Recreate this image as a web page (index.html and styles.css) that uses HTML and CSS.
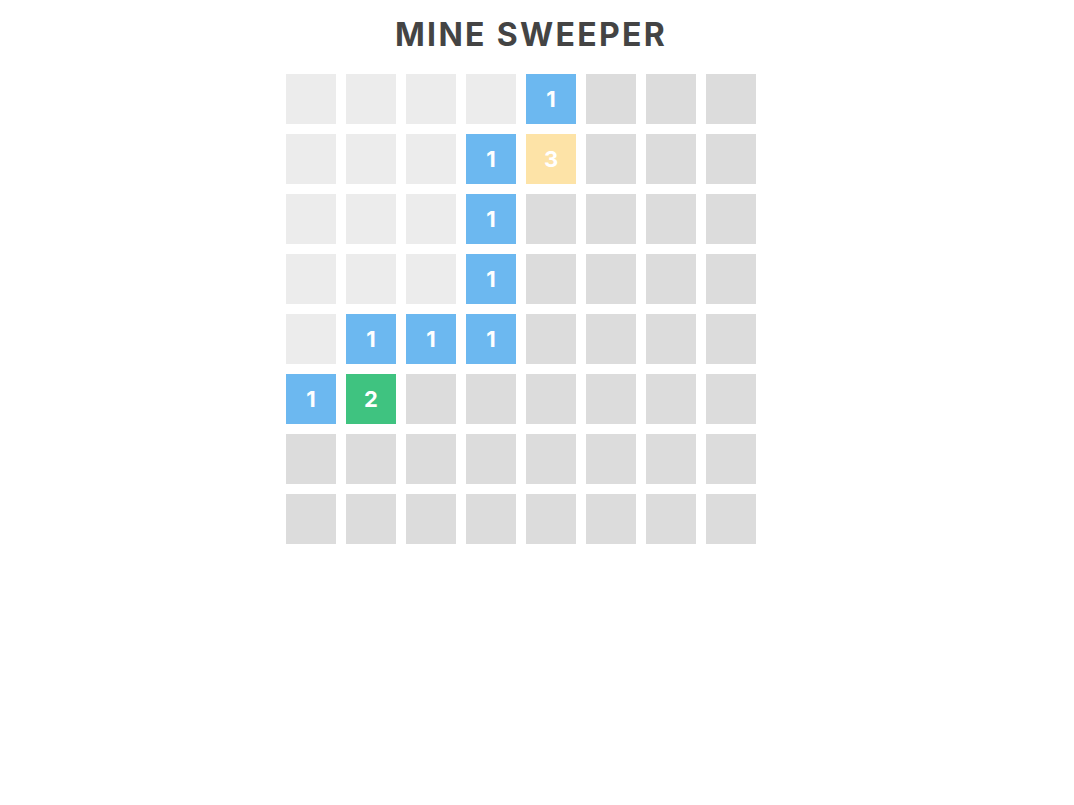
FILE: index.html
```html
<!DOCTYPE html>
<html lang="en">
<head>
    <meta charset="UTF-8">
    <title>Mine Sweeper</title>
    <link rel="stylesheet" href="styles.css">
</head>
<body>
    <div class="game">
        <h1 class="title">MINE SWEEPER</h1>
        <div class="board">
            <div class="cell open"></div><div class="cell open"></div><div class="cell open"></div><div class="cell open"></div><div class="cell one">1</div><div class="cell"></div><div class="cell"></div><div class="cell"></div>
            <div class="cell open"></div><div class="cell open"></div><div class="cell open"></div><div class="cell one">1</div><div class="cell three">3</div><div class="cell"></div><div class="cell"></div><div class="cell"></div>
            <div class="cell open"></div><div class="cell open"></div><div class="cell open"></div><div class="cell one">1</div><div class="cell"></div><div class="cell"></div><div class="cell"></div><div class="cell"></div>
            <div class="cell open"></div><div class="cell open"></div><div class="cell open"></div><div class="cell one">1</div><div class="cell"></div><div class="cell"></div><div class="cell"></div><div class="cell"></div>
            <div class="cell open"></div><div class="cell one">1</div><div class="cell one">1</div><div class="cell one">1</div><div class="cell"></div><div class="cell"></div><div class="cell"></div><div class="cell"></div>
            <div class="cell one">1</div><div class="cell two">2</div><div class="cell"></div><div class="cell"></div><div class="cell"></div><div class="cell"></div><div class="cell"></div><div class="cell"></div>
            <div class="cell"></div><div class="cell"></div><div class="cell"></div><div class="cell"></div><div class="cell"></div><div class="cell"></div><div class="cell"></div><div class="cell"></div>
            <div class="cell"></div><div class="cell"></div><div class="cell"></div><div class="cell"></div><div class="cell"></div><div class="cell"></div><div class="cell"></div><div class="cell"></div>
        </div>
    </div>
</body>
</html>
```
FILE: styles.css
```css
body {
    margin: 0;
    padding: 0;
    background-color: #fff;
    font-family: Inter, "Open Sans", sans-serif;
}

.game {
    width: 480px;
    margin-left: 281px;
}

.title {
    margin: 0;
    padding: 15px 0 0 20px;
    height: 44px;
    text-align: center;
    font-size: 32px;
    line-height: 40px;
    font-weight: 700;
    letter-spacing: 2.3px;
    color: #444;
}

.board {
    display: grid;
    grid-template-columns: repeat(8, 50px);
    gap: 10px;
    padding: 15px 5px 5px 5px;
}

.cell {
    width: 50px;
    height: 50px;
    background-color: #dcdcdc;
    color: #fff;
    font-size: 22px;
    font-weight: 700;
    display: flex;
    align-items: center;
    justify-content: center;
}

.open {
    background-color: #ececec;
}

.one {
    background-color: #6cb8f0;
}

.two {
    background-color: #3fc380;
}

.three {
    background-color: #fde3a7;
}
```
